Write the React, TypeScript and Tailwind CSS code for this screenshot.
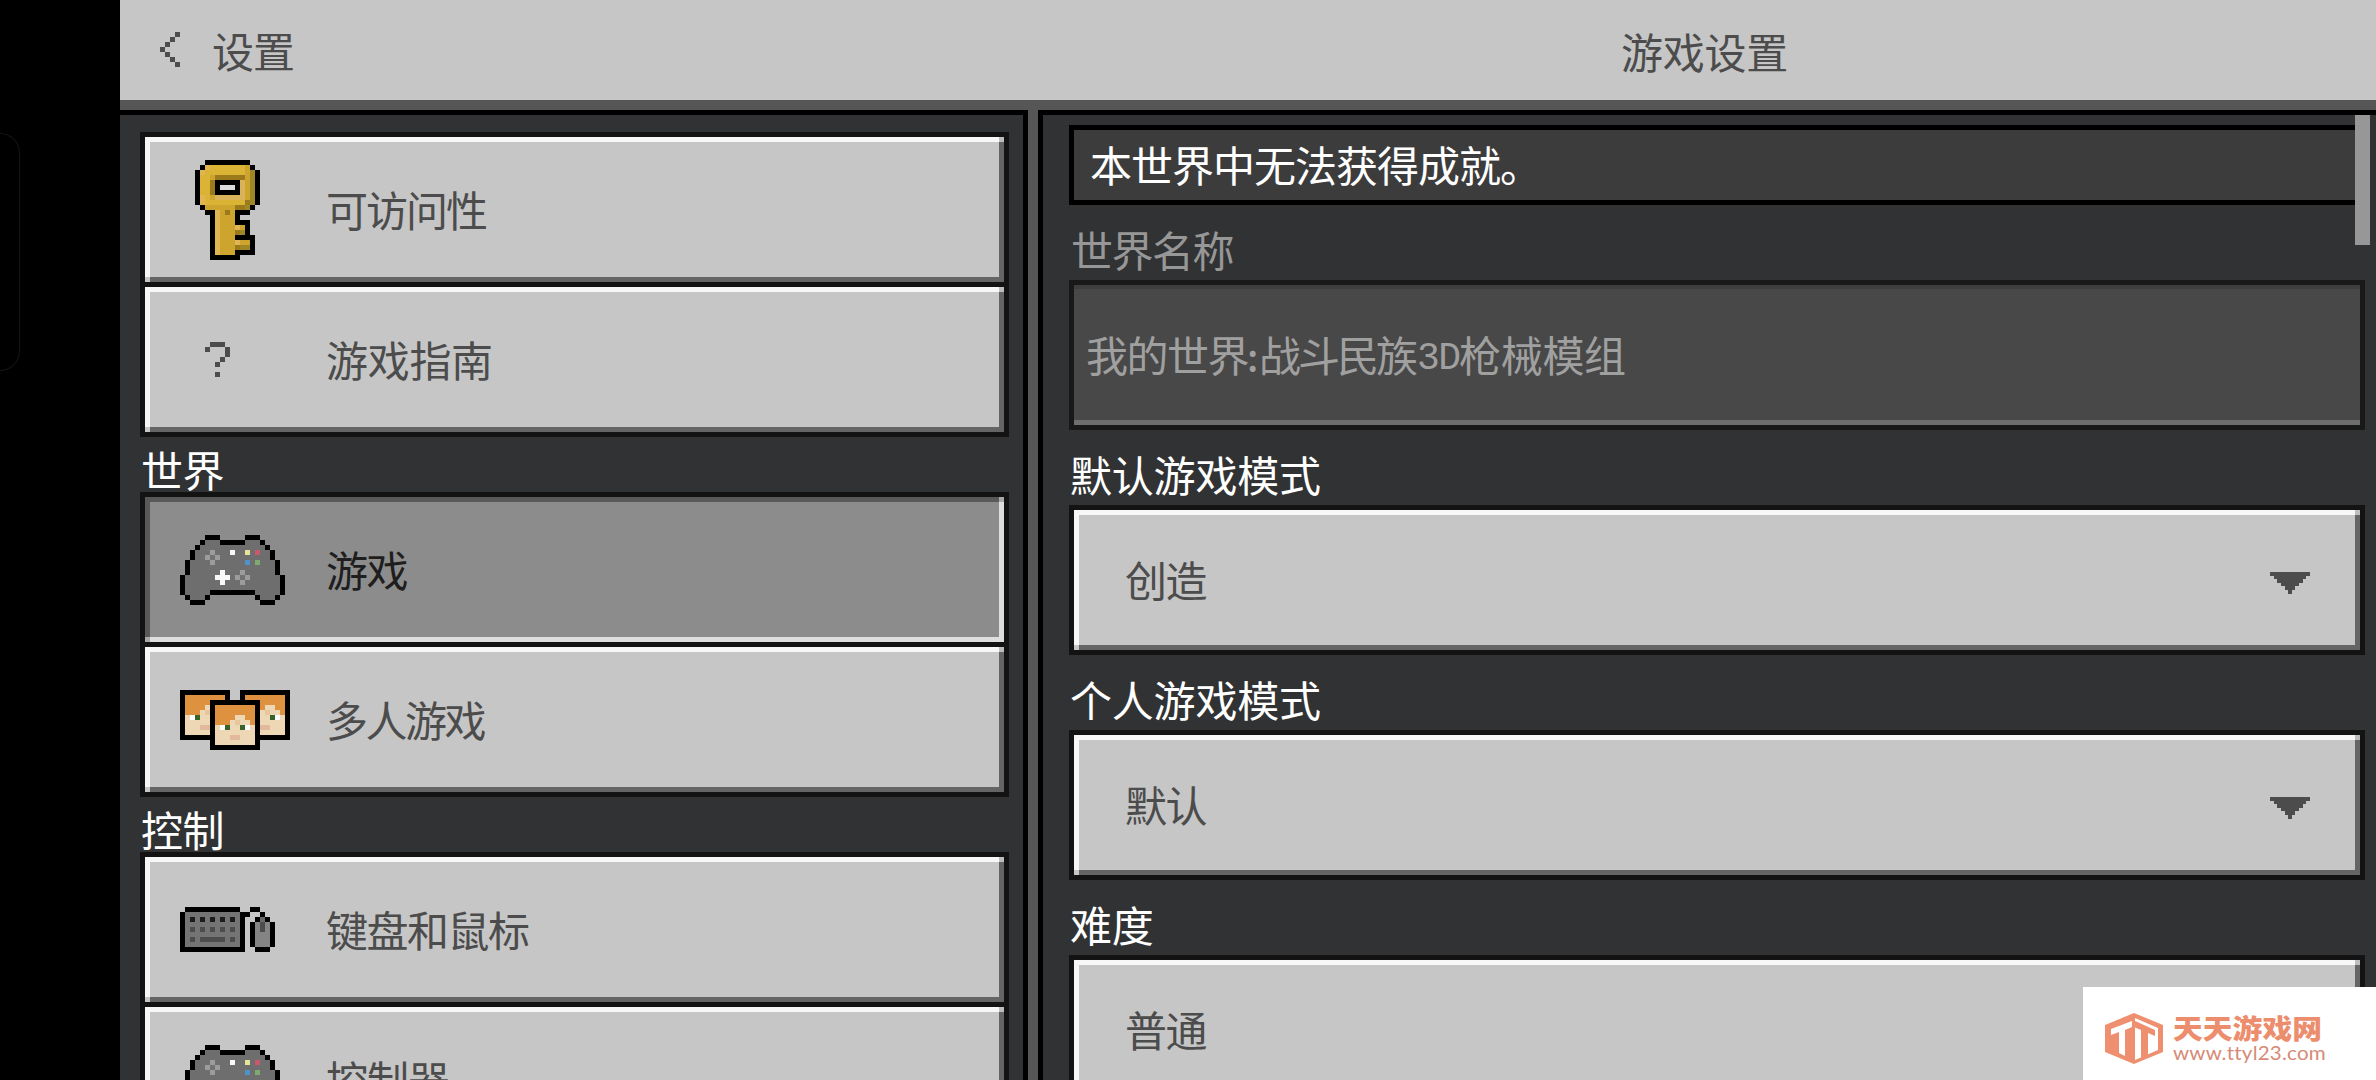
import React from "react";

type Palette = Record<string, string>;

/** Draws a pixel-art sprite; every map character is one 5px cell, "." is empty. */
function Sprite({ map, palette, className = "" }: { map: string[]; palette: Palette; className?: string }) {
  const w = Math.max(...map.map((r) => r.length));
  return (
    <svg
      width={w * 5}
      height={map.length * 5}
      viewBox={`0 0 ${w} ${map.length}`}
      shapeRendering="crispEdges"
      className={`shrink-0 ${className}`}
    >
      {map.flatMap((row, y) =>
        row.split("").map((c, x) =>
          c === "." ? null : <rect key={`${x}-${y}`} x={x} y={y} width={1} height={1} fill={palette[c]} />
        )
      )}
    </svg>
  );
}

const KEY = [
  "..kkkkkkkkk..",
  ".keyyyyyyygk.",
  "keyyyyyyyygok",
  "kyygddddddgok",
  "kyydkkkkklgok",
  "kyydkwwwklgok",
  "kyydkkkkklgok",
  "keygllllllgok",
  "keyyyyyyyydok",
  ".kggggggddok.",
  "..kkegdgkkk..",
  "...kegggk....",
  "...kegggkkk..",
  "...kegggegk..",
  "...kegggdok..",
  "...kegggkkkk.",
  "...kegggeggk.",
  "...kegggdook.",
  "...kegggkkkk.",
  "...kkkkkk....",
];
const KEY_COLORS: Palette = {
  k: "#000000",
  y: "#dbb335",
  e: "#e2b554",
  g: "#cda42e",
  d: "#9a7a1b",
  o: "#a08725",
  l: "#d9b35a",
  w: "#dcdcdc",
};

const PAD = [
  ".....kkk.....kkk.....",
  "....khhhkkkkkhhhk....",
  "...khhhhhhhhhhhhhk...",
  "..khhhlhhhwhhyhrhhk..",
  "..khhlglhhhhhhhhhhk..",
  ".khhhhlhhhhhhbhnhhhk.",
  ".khhhhhhhhhhhhhhhhhk.",
  ".khhhhhhwhhhlhhhhhhk.",
  "khhhhhhwwwhlglhhhhhhk",
  "khhhhhhhwhhhlhhhhhhhk",
  "khhhhhhhhhhhhhhhhhhhk",
  "khhhhhkkkkkkkkkhhhhhk",
  ".khhhk.........khhhk.",
  "..kkk...........kkk..",
];
const PAD_COLORS: Palette = {
  k: "#000000",
  h: "#6e6e6e",
  g: "#727272",
  l: "#9c9c9c",
  w: "#f8f8f8",
  y: "#e6e39a",
  r: "#c8586c",
  b: "#4d92c8",
  n: "#80a873",
};

const FACE = ["oooooooo", "oooooooo", "oooossoo", "ooosasso", "swgssgws", "ssssssss", "sssppsss", "ssssssss"];
const FACE_COLORS: Palette = {
  k: "#000000",
  o: "#de923f",
  s: "#eed7b5",
  a: "#e8c69c",
  w: "#ffffff",
  g: "#37622b",
  p: "#e3b99b",
};

/** Three framed heads, the middle one stacked in front. */
function composeHeads(): string[] {
  const grid = Array.from({ length: 12 }, () => Array<string>(22).fill("."));
  const stamp = (ox: number, oy: number) => {
    for (let y = 0; y < 10; y++)
      for (let x = 0; x < 10; x++) {
        const edge = x === 0 || y === 0 || x === 9 || y === 9;
        grid[oy + y][ox + x] = edge ? "k" : FACE[y - 1][x - 1];
      }
  };
  stamp(0, 0);
  stamp(12, 0);
  stamp(6, 2);
  return grid.map((r) => r.join(""));
}
const HEADS = composeHeads();

const KEYBOARD = [
  ".kkkkkkkkkkk..kk...",
  "khhhhhhhhhhhkk..k..",
  "khbhbhbhbhbhk..kgk.",
  "khhhhhhhhhhhk.kmdmk",
  "khdhdhdhdhdhk.kmdmk",
  "khhhhhhhhhhhk.kmmmk",
  "khdhdddddhdhk.kmmmk",
  "khhhhhhhhhhhk.kmmmk",
  "kkkkkkkkkkkkk..kkk.",
];
const KEYBOARD_COLORS: Palette = { k: "#000000", h: "#747474", b: "#1c1c1c", d: "#4c4c4c", g: "#6a6a6a", m: "#848484" };

const CHEVRON = ["...k", "..k.", ".k..", "k...", ".k..", "..k.", "...k"];
const QUESTION = [".kkk.", "k...k", "....k", "...k.", "..k..", ".....", "..k.."];
const INK: Palette = { k: "#4c4c4c" };

const ARROW_STEPS = [
  { x: 0, y: 0, w: 40, h: 4 },
  { x: 4, y: 4, w: 32, h: 3 },
  { x: 7, y: 7, w: 26, h: 4 },
  { x: 11, y: 11, w: 18, h: 3 },
  { x: 15, y: 14, w: 10, h: 4 },
  { x: 18, y: 18, w: 4, h: 4 },
];

function DropArrow() {
  return (
    <svg width="40" height="22" viewBox="0 0 40 22" shapeRendering="crispEdges" className="shrink-0" fill="#4c4c4c">
      {ARROW_STEPS.map((s) => (
        <rect key={s.y} x={s.x} y={s.y} width={s.w} height={s.h} />
      ))}
    </svg>
  );
}

/** Raised button face: light on the top and left, shade on the right and bottom. */
function Bevel({ children, pressed = false }: { children: React.ReactNode; pressed?: boolean }) {
  return (
    <div className="h-full border-5 border-[#131313]">
      <div
        className={
          pressed
            ? "grid h-full grid-cols-[5px_1fr_5px] grid-rows-[5px_1fr_5px] bg-[#8c8c8c]"
            : "grid h-full grid-cols-[5px_1fr_5px] grid-rows-[5px_1fr_5px] bg-[#c6c6c6]"
        }
      >
        <div className={pressed ? "col-span-2 bg-[#595959]" : "col-span-2 bg-[#f7f7f7]"} />
        <div className={pressed ? "bg-[#a8a8a8]" : "bg-[#bdbdbd]"} />
        <div className={pressed ? "bg-[#595959]" : "bg-[#f7f7f7]"} />
        <div className="flex min-w-0 items-center">{children}</div>
        <div className={pressed ? "bg-[#dedede]" : "bg-[#656565]"} />
        <div className={pressed ? "bg-[#a8a8a8]" : "bg-[#c6c6c6]"} />
        <div className={pressed ? "col-span-2 bg-[#dedede]" : "col-span-2 bg-[#656565]"} />
      </div>
    </div>
  );
}

function NavItem({
  icon,
  label,
  pressed,
  className = "",
}: {
  icon: React.ReactNode;
  label: string;
  pressed?: boolean;
  className?: string;
}) {
  return (
    <button className="-mb-[5px] block h-[155px] w-[869px] shrink-0 text-left">
      <Bevel pressed={pressed}>
        <span className="flex h-[100px] w-[176px] shrink-0 items-center pl-[30px]">{icon}</span>
        <span className={`pb-px ${pressed ? "text-[#1e1e1e]" : "text-[#4c4c4c]"} ${className}`}>{label}</span>
      </Bevel>
    </button>
  );
}

function NavHeading({ children }: { children: string }) {
  return <h2 className="mt-[5px] h-[55px] shrink-0 pt-[8px] pl-px tracking-[-0.5px] text-white">{children}</h2>;
}

function Dropdown({ label, value }: { label: string; value: string }) {
  return (
    <section className="shrink-0">
      <h3 className="h-[75px] pt-[16px] pl-px leading-[56px] tracking-[-0.2px] text-white">{label}</h3>
      <div className="h-[150px]">
        <Bevel>
          <span className="flex-1 pb-[2px] pl-[46px] tracking-[-1.500px] text-[#4c4c4c]">{value}</span>
          <span className="flex pt-[5px] pr-[45px]">
            <DropArrow />
          </span>
        </Bevel>
      </div>
    </section>
  );
}

function SiteBadge() {
  return (
    <div className="absolute right-0 bottom-0 flex h-[93px] w-[293px] items-start bg-white pl-[22px]">
      <svg width="58" height="51" viewBox="0 0 58 51" className="mt-[26px] shrink-0">
        <path d="M29 0 58 12V39L29 51 0 39V12Z" fill="#ee8f70" />
        <path d="M30 5 53 15V37L30 47Z" fill="#fff" />
        <path d="M30 8 50 17V23L43 20V42L36 45V17L30 14.500Z" fill="#ee8f70" />
        <path d="M6 16 27 8V14L20 17V43L14 40V19L6 22Z" fill="#fff" />
      </svg>
      <div className="mt-[27px] ml-[10px] flex flex-col">
        <span className="h-[30px] origin-top-left scale-y-90 text-[29.800px] leading-[31px] font-black whitespace-nowrap text-[#ec8d6d]">
          天天游戏网
        </span>
        <span className="origin-left scale-x-[1.11] font-['Lato'] text-[18.500px] leading-[18px] tracking-[0.2px] whitespace-nowrap text-[#d58b76]">
          www.ttyl23.com
        </span>
      </div>
    </div>
  );
}

export default function App() {
  return (
    <div className="relative flex h-[1080px] w-[2376px] overflow-hidden bg-black font-['Noto_Sans_CJK_SC','Noto_Sans',sans-serif] text-[42px] leading-[48px] whitespace-nowrap">
      <aside className="w-[120px] shrink-0 pt-[133px]">
        <div className="h-[238px] w-[20px] rounded-r-[20px] border-y border-r border-[#141414]" />
      </aside>

      <div className="flex min-w-0 flex-1 flex-col bg-[#565656]">
        <header className="flex h-[100px] shrink-0 items-center bg-[#c6c6c6] text-[#4c4c4c]">
          <div className="flex w-[913px] items-center pl-[40px]">
            <Sprite map={CHEVRON} palette={INK} className="-mt-px" />
            <span className="ml-[32px] tracking-[-1px]">设置</span>
          </div>
          <h1 className="flex-1 pt-px text-center tracking-[-0.2px]">游戏设置</h1>
        </header>

        <div className="mt-[10px] flex h-[970px] gap-[10px]">
          <nav className="flex w-[908px] shrink-0 flex-col overflow-hidden border-t-5 border-r-5 border-black bg-[#313233] pt-[17px] pl-[20px]">
            <NavItem icon={<Sprite map={KEY} palette={KEY_COLORS} className="mt-px ml-[15px]" />} label="可访问性" className="tracking-[-2px]" />
            <NavItem icon={<Sprite map={QUESTION} palette={INK} className="ml-[25px]" />} label="游戏指南" className="tracking-[-0.3px]" />
            <NavHeading>世界</NavHeading>
            <NavItem pressed icon={<Sprite map={PAD} palette={PAD_COLORS} className="mt-px" />} label="游戏" className="tracking-[-1.5px]" />
            <NavItem icon={<Sprite map={HEADS} palette={FACE_COLORS} className="mt-px" />} label="多人游戏" className="tracking-[-2.5px]" />
            <NavHeading>控制</NavHeading>
            <NavItem icon={<Sprite map={KEYBOARD} palette={KEYBOARD_COLORS} />} label="键盘和鼠标" className="tracking-[-1.5px]" />
            <NavItem icon={<Sprite map={PAD} palette={PAD_COLORS} className="mt-px" />} label="控制器" className="tracking-[-1px]" />
          </nav>

          <main className="relative flex min-w-0 flex-1 flex-col border-t-5 border-l-5 border-black bg-[#313233] pt-[10px] pr-[11px] pl-[26px]">
            <div className="flex h-[80px] shrink-0 items-center border-5 border-black bg-[#3c3c3c] pb-[3px] pl-[16px] tracking-[-1px] text-white">
              本世界中无法获得成就。
            </div>
            <h3 className="h-[75px] shrink-0 pt-[16px] pl-[2px] leading-[56px] tracking-[-1.5px] text-[#979797]">世界名称</h3>
            <div className="flex h-[150px] shrink-0 items-center border-5 border-[#191919] bg-[#484848] pb-[2px] pl-[12px] text-[#a0a0a0] shadow-[inset_0_4px_0_#3e3e3e,inset_0_-5px_0_#6f6f6f]">
              <span className="w-[161px] tracking-[-1.500px]">我的世界</span>
              <span className="w-[12px] pt-[3px] text-[38px] font-medium">:</span>
              <span className="w-[158px] tracking-[-3px]">战斗民族</span>
              <span className="w-[42px] pt-[10px] font-['Liberation_Mono'] text-[38px] tracking-[-1.500px]">3D</span>
              <span className="tracking-[-0.3px]">枪械模组</span>
            </div>
            <Dropdown label="默认游戏模式" value="创造" />
            <Dropdown label="个人游戏模式" value="默认" />
            <Dropdown label="难度" value="普通" />
            <div className="absolute top-0 right-[6px] h-[130px] w-[15px] bg-[#979797]" />
          </main>
        </div>
      </div>

      <SiteBadge />
    </div>
  );
}
